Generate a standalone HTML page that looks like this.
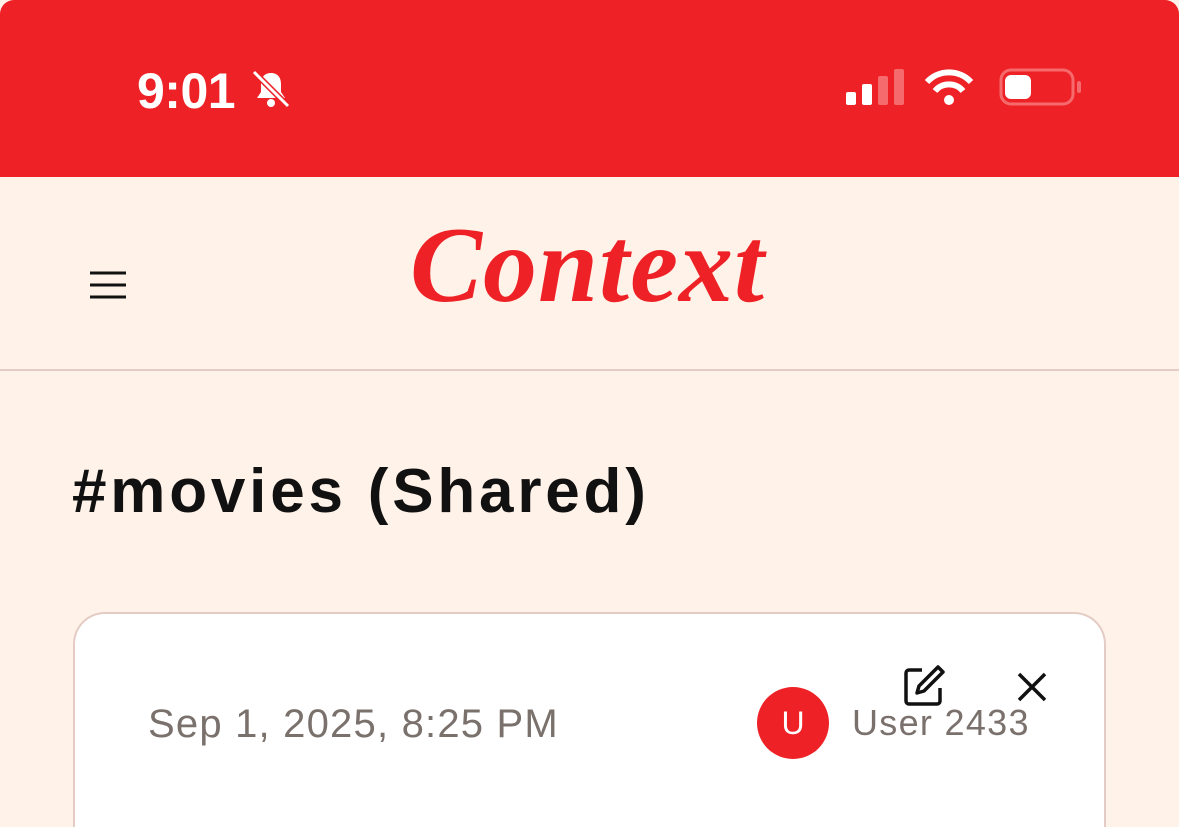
<!DOCTYPE html>
<html><head><meta charset="utf-8"><style>
*{margin:0;padding:0;box-sizing:border-box}
html,body{width:1179px;height:827px;overflow:hidden}
body{background:#FFF2E9;font-family:"Liberation Sans",sans-serif;position:relative}
.sb{position:absolute;left:0;top:0;width:1179px;height:177px;background:#EE2226;border-radius:14px 14px 0 0}
.time{position:absolute;left:137px;top:62px;color:#fff;font-size:50px;font-weight:bold;letter-spacing:-0.5px}
.hdr{position:absolute;top:177px;left:0;width:1179px;height:194px;border-bottom:2px solid #E2CCC4}
.logo{position:absolute;left:410px;top:204px;font-family:"Liberation Serif",serif;font-style:italic;font-weight:bold;font-size:108px;color:#EE2226;letter-spacing:1px}
h1{position:absolute;left:72px;top:456px;font-size:62px;font-weight:bold;color:#111;letter-spacing:3.8px}
.card{position:absolute;left:73px;top:612px;width:1033px;height:215px;background:#fff;border:2px solid #E4CCC4;border-bottom:none;border-radius:32px 32px 0 0}
.date{position:absolute;left:148px;top:702px;font-size:40px;color:#7a716c;letter-spacing:1.2px}
.av{position:absolute;left:757px;top:687px;width:72px;height:72px;border-radius:50%;background:#EE2226;color:#fff;font-size:32px;text-align:center;line-height:72px}
.user{position:absolute;left:852px;top:702px;font-size:36px;color:#7a716c;letter-spacing:1.3px}
</style></head><body>
<div class="sb"></div>
<div class="time">9:01</div>
<svg style="position:absolute;left:250px;top:68px" width="42" height="42" viewBox="0 0 42 42"><path d="M21 5c-7 0-10 5-10 11v8l-4 6h28l-4-6v-8c0-6-3-11-10-11z" fill="#fff"/><circle cx="21" cy="35" r="4" fill="#fff"/><path d="M4 4l34 34" stroke="#EE2226" stroke-width="6"/><path d="M4 4l34 34" stroke="#fff" stroke-width="3"/></svg>
<svg style="position:absolute;left:845px;top:68px" width="240" height="40"><rect x="1" y="24" width="10" height="13" rx="2" fill="#fff"/><rect x="17" y="16" width="10" height="21" rx="2" fill="#fff"/><rect x="33" y="8" width="10" height="29" rx="2" fill="#F56A6C"/><rect x="49" y="1" width="10" height="36" rx="2" fill="#F56A6C"/><path d="M82 14a30 30 0 0 1 44 0" stroke="#fff" stroke-width="6" fill="none"/><path d="M90 23a18 18 0 0 1 28 0" stroke="#fff" stroke-width="6" fill="none"/><circle cx="104" cy="32" r="5" fill="#fff"/><rect x="156" y="2" width="72" height="34" rx="10" fill="none" stroke="#F56A6C" stroke-width="3"/><rect x="160" y="7" width="26" height="24" rx="6" fill="#fff"/><rect x="232" y="13" width="4" height="12" rx="2" fill="#F56A6C"/></svg>
<div class="hdr"></div>
<svg style="position:absolute;left:90px;top:270px" width="36" height="30"><path d="M0 3h36M0 15h36M0 27h36" stroke="#111" stroke-width="3"/></svg>
<div class="logo">Context</div>
<h1>#movies (Shared)</h1>
<div class="card"></div>
<div class="date">Sep 1, 2025, 8:25 PM</div>
<div class="av">U</div>
<div class="user">User 2433</div>
<svg style="position:absolute;left:902px;top:664px" width="46" height="44" viewBox="0 0 46 44"><path d="M20 6H7a3 3 0 0 0-3 3v28a3 3 0 0 0 3 3h28a3 3 0 0 0 3-3V24" stroke="#111" stroke-width="3.5" fill="none"/><path d="M36 3l5 5-19 19-7 2 2-7z" stroke="#111" stroke-width="3.5" fill="none" stroke-linejoin="round"/></svg>
<svg style="position:absolute;left:1017px;top:672px" width="30" height="30"><path d="M2 2l26 26M28 2L2 28" stroke="#111" stroke-width="3.5"/></svg>
</body></html>
